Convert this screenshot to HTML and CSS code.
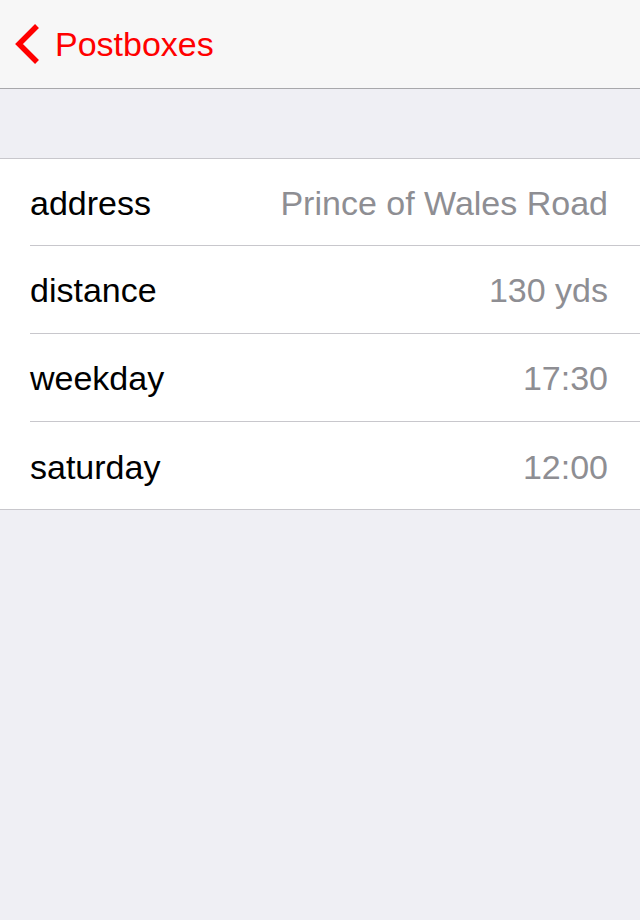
FILE: index.html
```html
<!DOCTYPE html>
<html>
<head>
<meta charset="utf-8">
<link rel="stylesheet" href="styles.css">
</head>
<body>
<div class="nav">
  <a class="back">
    <svg class="chev" width="30" height="44" viewBox="0 0 30 44"><polyline points="23,3 5,21 23,39" fill="none" stroke="#ff0000" stroke-width="5.5"/></svg>
    <span class="back-label">Postboxes</span>
  </a>
</div>
<div class="spacer"></div>
<div class="table">
  <div class="row first"><span class="label">address</span><span class="value">Prince of Wales Road</span></div>
  <div class="row"><span class="label">distance</span><span class="value">130 yds</span></div>
  <div class="row"><span class="label">weekday</span><span class="value">17:30</span></div>
  <div class="row last"><span class="label">saturday</span><span class="value">12:00</span></div>
</div>
</body>
</html>
```
FILE: styles.css
```css
html, body {
  margin: 0;
  padding: 0;
  background: #efeff4;
  font-family: "Liberation Sans", Arial, sans-serif;
}
.nav {
  height: 89px;
  box-sizing: border-box;
  background: #f7f7f7;
  border-bottom: 1px solid #a8a8ab;
  display: flex;
  align-items: center;
  padding-left: 14px;
}
.back {
  display: flex;
  align-items: center;
  color: #ff0000;
}
.chev {
  display: block;
  margin-right: 11px;
  margin-top: 2px;
}
.back-label {
  font-size: 34px;
  line-height: 40px;
}
.spacer {
  height: 69px;
}
.table {
  background: #fff;
  border-top: 1px solid #c8c7cc;
  border-bottom: 1px solid #c8c7cc;
  padding-left: 30px;
}
.row {
  height: 88px;
  box-sizing: border-box;
  border-bottom: 1px solid #c8c7cc;
  display: flex;
  align-items: center;
  justify-content: space-between;
  padding-right: 32px;
  padding-top: 2px;
  font-size: 34px;
}
.row.first {
  height: 87px;
  padding-top: 3px;
}
.row.last {
  border-bottom: none;
  height: 87px;
  padding-top: 3px;
}
.label {
  color: #000;
}
.value {
  color: #8e8e93;
}
```
